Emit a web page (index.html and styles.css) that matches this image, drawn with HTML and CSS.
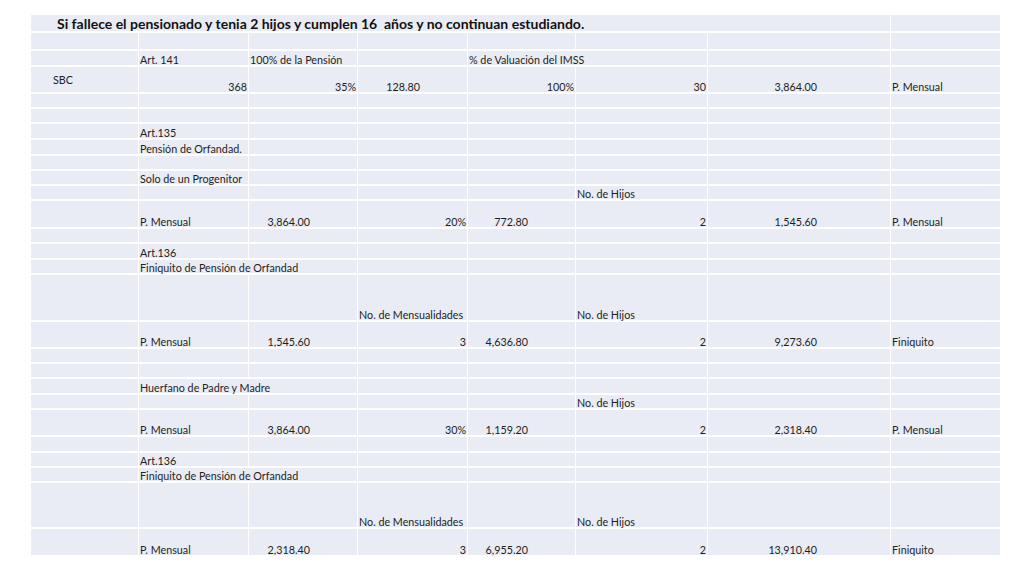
FILE: index.html
```html
<!DOCTYPE html>
<html lang="es">
<head>
<meta charset="utf-8">
<title>Pensión de Orfandad</title>
<link rel="stylesheet" href="styles.css">
</head>
<body>
<div class="sheet">
  <!-- 1 -->
  <div class="c title span7">Si fallece el pensionado y tenia 2 hijos y cumplen 16&nbsp; años y no continuan estudiando.</div><div class="c"></div>
  <!-- 2 -->
  <div class="c"></div><div class="c"></div><div class="c"></div><div class="c"></div><div class="c"></div><div class="c"></div><div class="c"></div><div class="c"></div>
  <!-- 3 -->
  <div class="c"></div><div class="c">Art. 141</div><div class="c">100% de la Pensión</div><div class="c"></div><div class="c span2">% de Valuación del IMSS</div><div class="c"></div><div class="c"></div>
  <!-- 4 -->
  <div class="c top sbc">SBC</div><div class="c r">368</div><div class="c r">35%</div><div class="c n">128.80</div><div class="c r">100%</div><div class="c r">30</div><div class="c n7">3,864.00</div><div class="c">P. Mensual</div>
  <!-- 5 -->
  <div class="c"></div><div class="c"></div><div class="c"></div><div class="c"></div><div class="c"></div><div class="c"></div><div class="c"></div><div class="c"></div>
  <!-- 6 -->
  <div class="c"></div><div class="c"></div><div class="c"></div><div class="c"></div><div class="c"></div><div class="c"></div><div class="c"></div><div class="c"></div>
  <!-- 7 -->
  <div class="c"></div><div class="c">Art.135</div><div class="c"></div><div class="c"></div><div class="c"></div><div class="c"></div><div class="c"></div><div class="c"></div>
  <!-- 8 -->
  <div class="c"></div><div class="c">Pensión de Orfandad.</div><div class="c"></div><div class="c"></div><div class="c"></div><div class="c"></div><div class="c"></div><div class="c"></div>
  <!-- 9 -->
  <div class="c"></div><div class="c"></div><div class="c"></div><div class="c"></div><div class="c"></div><div class="c"></div><div class="c"></div><div class="c"></div>
  <!-- 10 -->
  <div class="c"></div><div class="c">Solo de un Progenitor</div><div class="c"></div><div class="c"></div><div class="c"></div><div class="c"></div><div class="c"></div><div class="c"></div>
  <!-- 11 -->
  <div class="c"></div><div class="c"></div><div class="c"></div><div class="c"></div><div class="c"></div><div class="c">No. de Hijos</div><div class="c"></div><div class="c"></div>
  <!-- 12 -->
  <div class="c"></div><div class="c">P. Mensual</div><div class="c n">3,864.00</div><div class="c r">20%</div><div class="c n">772.80</div><div class="c r">2</div><div class="c n7">1,545.60</div><div class="c">P. Mensual</div>
  <!-- 13 -->
  <div class="c"></div><div class="c"></div><div class="c"></div><div class="c"></div><div class="c"></div><div class="c"></div><div class="c"></div><div class="c"></div>
  <!-- 14 -->
  <div class="c"></div><div class="c">Art.136</div><div class="c"></div><div class="c"></div><div class="c"></div><div class="c"></div><div class="c"></div><div class="c"></div>
  <!-- 15 -->
  <div class="c"></div><div class="c span2">Finiquito de Pensión de Orfandad</div><div class="c"></div><div class="c"></div><div class="c"></div><div class="c"></div><div class="c"></div>
  <!-- 16 -->
  <div class="c"></div><div class="c"></div><div class="c"></div><div class="c">No. de Mensualidades</div><div class="c"></div><div class="c">No. de Hijos</div><div class="c"></div><div class="c"></div>
  <!-- 17 -->
  <div class="c"></div><div class="c">P. Mensual</div><div class="c n">1,545.60</div><div class="c r">3</div><div class="c n">4,636.80</div><div class="c r">2</div><div class="c n7">9,273.60</div><div class="c">Finiquito</div>
  <!-- 18 -->
  <div class="c"></div><div class="c"></div><div class="c"></div><div class="c"></div><div class="c"></div><div class="c"></div><div class="c"></div><div class="c"></div>
  <!-- 19 -->
  <div class="c"></div><div class="c"></div><div class="c"></div><div class="c"></div><div class="c"></div><div class="c"></div><div class="c"></div><div class="c"></div>
  <!-- 20 -->
  <div class="c"></div><div class="c span2">Huerfano de Padre y Madre</div><div class="c"></div><div class="c"></div><div class="c"></div><div class="c"></div><div class="c"></div>
  <!-- 21 -->
  <div class="c"></div><div class="c"></div><div class="c"></div><div class="c"></div><div class="c"></div><div class="c">No. de Hijos</div><div class="c"></div><div class="c"></div>
  <!-- 22 -->
  <div class="c"></div><div class="c">P. Mensual</div><div class="c n">3,864.00</div><div class="c r">30%</div><div class="c n">1,159.20</div><div class="c r">2</div><div class="c n7">2,318.40</div><div class="c">P. Mensual</div>
  <!-- 23 -->
  <div class="c"></div><div class="c"></div><div class="c"></div><div class="c"></div><div class="c"></div><div class="c"></div><div class="c"></div><div class="c"></div>
  <!-- 24 -->
  <div class="c"></div><div class="c">Art.136</div><div class="c"></div><div class="c"></div><div class="c"></div><div class="c"></div><div class="c"></div><div class="c"></div>
  <!-- 25 -->
  <div class="c"></div><div class="c span2">Finiquito de Pensión de Orfandad</div><div class="c"></div><div class="c"></div><div class="c"></div><div class="c"></div><div class="c"></div>
  <!-- 26 -->
  <div class="c"></div><div class="c"></div><div class="c"></div><div class="c">No. de Mensualidades</div><div class="c"></div><div class="c">No. de Hijos</div><div class="c"></div><div class="c"></div>
  <!-- 27 -->
  <div class="c"></div><div class="c">P. Mensual</div><div class="c n">2,318.40</div><div class="c r">3</div><div class="c n">6,955.20</div><div class="c r">2</div><div class="c n7">13,910.40</div><div class="c">Finiquito</div>
</div>
</body>
</html>
```
FILE: styles.css
```css
html, body {
  margin: 0;
  padding: 0;
  background: #ffffff;
}

body {
  font-family: Lato, "Liberation Sans", sans-serif;
  font-size: 10.75px;
  color: #1e1e1e;
}

.sheet {
  margin: 15px 0 0 31px;
  width: 970px;
  display: grid;
  grid-template-columns: 108px 110px 109px 110px 108px 132px 183px 110px;
  grid-template-rows: 18px 18px 16px 27px 15px 15px 16px 16px 15px 15px 15px 28px 15px 16px 15px 47px 27px 15px 15px 16px 15px 27px 16px 15px 15px 46px 28px;
}

.c {
  box-sizing: border-box;
  background: #e9ecf4;
  border-right: 1px solid #ffffff;
  border-bottom: 2px solid #ffffff;
  display: flex;
  align-items: flex-end;
  padding: 0 0 0 1px;
  line-height: 10px;
  white-space: nowrap;
  overflow: visible;
}

.span2 { grid-column: span 2; }
.span7 { grid-column: span 7; }

.title {
  font-size: 14px;
  font-weight: 700;
  line-height: 14px;
  padding-left: 26px;
  color: #111;
}

.r {
  justify-content: flex-end;
  padding-right: 1px;
}

.n {
  justify-content: flex-end;
  padding-right: 47px;
}

.n7 {
  justify-content: flex-end;
  padding-right: 73px;
}

.top {
  align-items: flex-start;
  padding-top: 8px;
}

.sbc {
  padding-left: 22px;
}
```
